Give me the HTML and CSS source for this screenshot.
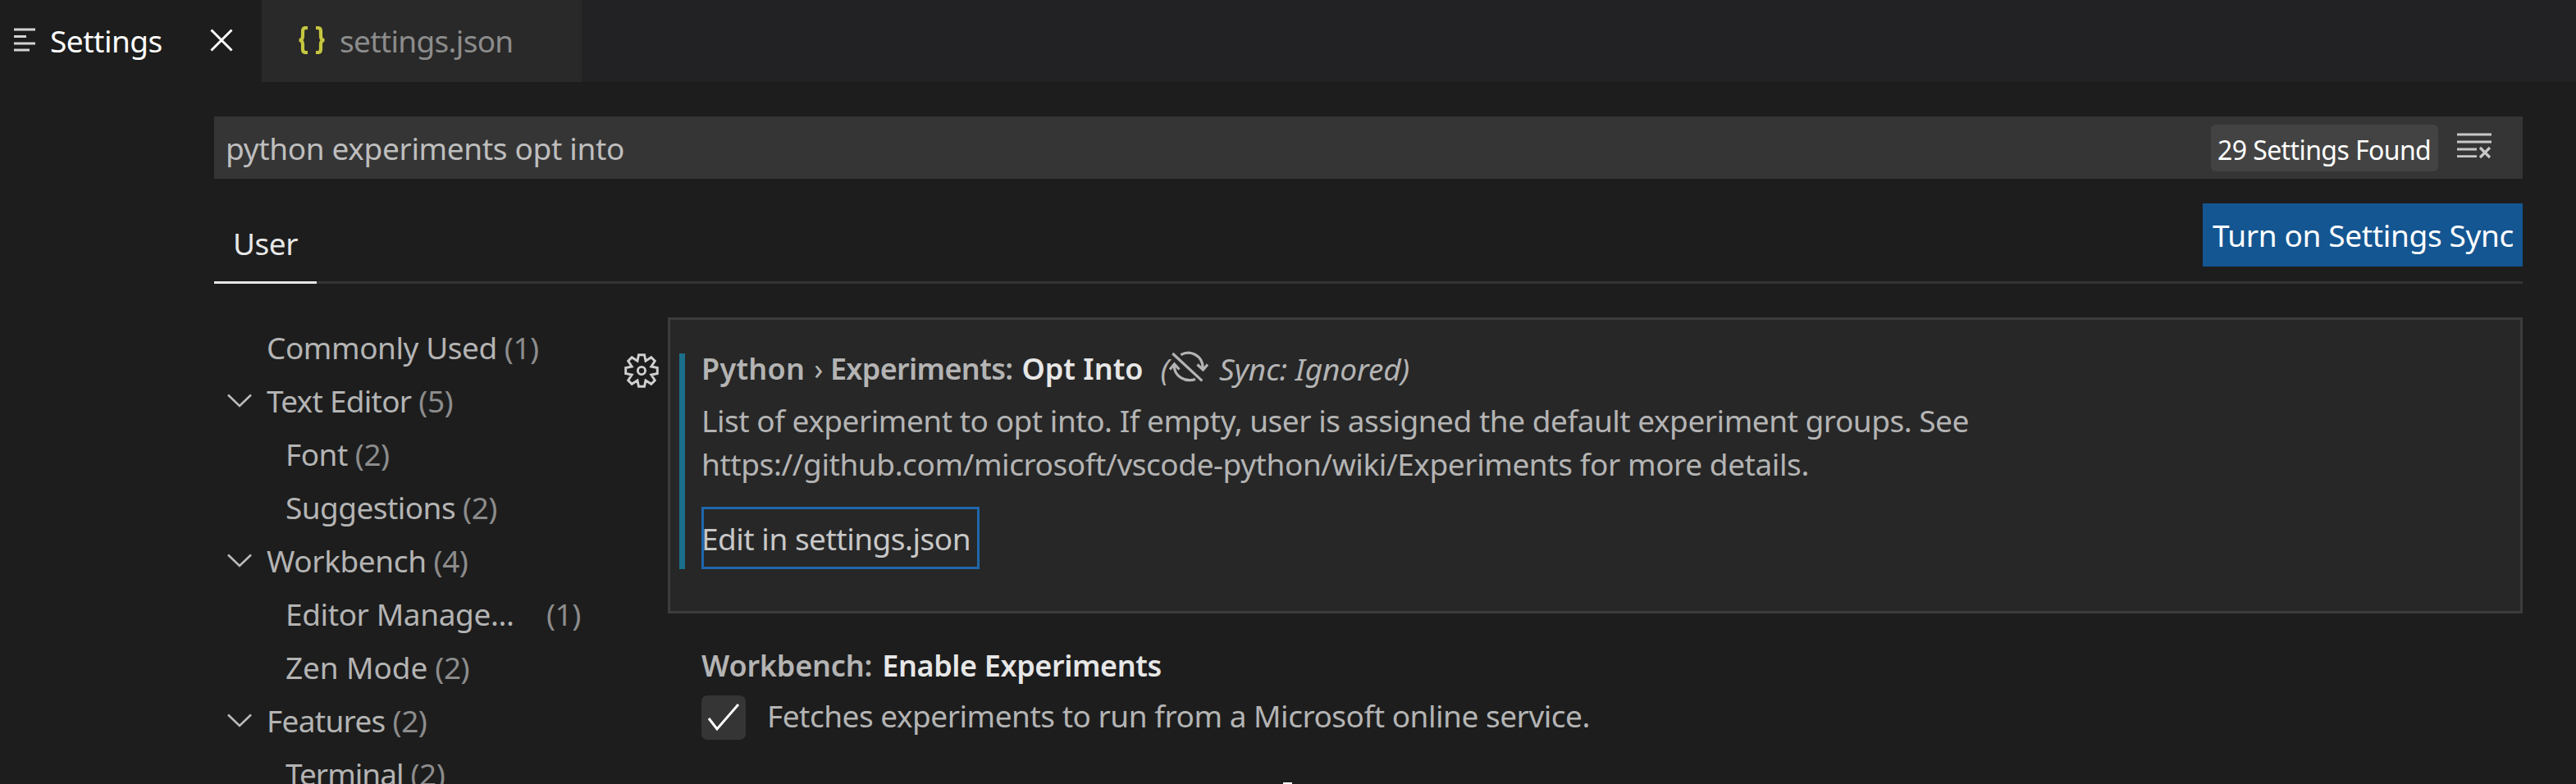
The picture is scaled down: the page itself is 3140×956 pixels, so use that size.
FILE: index.html
```html
<!DOCTYPE html>
<html lang="en">
<head>
<meta charset="utf-8">
<title>Settings</title>
<link rel="stylesheet" href="styles.css">
</head>
<body>
<div class="window">
  <div class="tabs">
    <div class="tab tab-active">
      <svg class="icon-list" width="27" height="30" viewBox="0 0 27 30"><path d="M0 2h26M0 10.5h15M0 19h26M0 27h19" stroke="#d4d4d4" stroke-width="2.8"/></svg>
      <span class="tab-label">Settings</span>
      <svg class="icon-close" width="28" height="28" viewBox="0 0 28 28"><path d="M1.5 1.5l25 25M26.5 1.5l-25 25" stroke="#fff" stroke-width="3" fill="none"/></svg>
    </div>
    <div class="tab tab-idle">
      <svg class="icon-braces" width="34" height="34" viewBox="0 0 34 34"><path d="M12 2H9.5Q6 2 6 6v6Q6 17 1.5 17Q6 17 6 22v6Q6 32 9.500 32H12M22 2h2.500Q28 2 28 6v6Q28 17 32.500 17Q28 17 28 22v6Q28 32 24.500 32H22" stroke="#c6c640" stroke-width="4.200" fill="none"/></svg>
      <span class="tab-label tab-json">settings.json</span>
    </div>
  </div>
  <div class="editor">
    <div class="search">
      <span class="query">python experiments opt into</span>
      <span class="badge">29 Settings Found</span>
      <svg class="icon-clear" width="42" height="32" viewBox="0 0 42 32"><path d="M0 2h42M0 11h42M0 20h24M0 28.700h24" stroke="#c8c8c8" stroke-width="2.800"/><path d="M28 18l12 12M40 18L28 30" stroke="#c8c8c8" stroke-width="3.200"/></svg>
    </div>
    <div class="scope">
      <div class="scope-tab">User</div>
      <button class="sync-button">Turn on Settings Sync</button>
    </div>
    <div class="body">
      <div class="toc">
        <div class="row"><span class="name commonly">Commonly Used</span><span class="count">(1)</span></div>
        <div class="row"><svg class="chevron" width="30" height="18" viewBox="0 0 30 18"><path d="M1 1.500l14 13.500l14-13.500" stroke="#bbb" stroke-width="2.600" fill="none"/></svg><span class="name text-editor">Text Editor</span><span class="count">(5)</span></div>
        <div class="row child"><span class="name">Font</span><span class="count">(2)</span></div>
        <div class="row child"><span class="name suggestions">Suggestions</span><span class="count">(2)</span></div>
        <div class="row"><svg class="chevron" width="30" height="18" viewBox="0 0 30 18"><path d="M1 1.500l14 13.500l14-13.500" stroke="#bbb" stroke-width="2.600" fill="none"/></svg><span class="name workbench">Workbench</span><span class="count">(4)</span></div>
        <div class="row child"><span class="name manage">Editor Manage...</span><span class="count">(1)</span></div>
        <div class="row child"><span class="name zen">Zen Mode</span><span class="count">(2)</span></div>
        <div class="row"><svg class="chevron" width="30" height="18" viewBox="0 0 30 18"><path d="M1 1.500l14 13.500l14-13.500" stroke="#bbb" stroke-width="2.600" fill="none"/></svg><span class="name features">Features</span><span class="count">(2)</span></div>
        <div class="row child"><span class="name terminal">Terminal</span><span class="count">(2)</span></div>
      </div>
      <div class="gear">
        <svg width="42" height="42" viewBox="-21 -21 42 42"><path d="M-3.500 -19.300H3.500L5 -11.800L11.800 -16.300L16.300 -11.800L11.800 -5L19.300 -3.500V3.500L11.800 5L16.300 11.800L11.800 16.300L5 11.800L3.500 19.300H-3.500L-5 11.800L-11.800 16.300L-16.300 11.800L-11.800 5L-19.300 3.500V-3.500L-11.800 -5L-16.300 -11.800L-11.800 -16.300L-5 -11.800Z" stroke="#d0d0d0" stroke-width="2.900" fill="none"/><circle r="4.600" stroke="#d0d0d0" stroke-width="2.900" fill="none"/></svg>
      </div>
      <div class="settings">
        <div class="card">
          <div class="modified"></div>
          <div class="content">
            <div class="title"><span class="python">Python</span><span class="sep">›</span><span class="experiments">Experiments:</span><strong class="opt">Opt Into</strong><em class="paren">(</em><svg class="icon-sync" width="48" height="38" viewBox="0 0 48 38"><path d="M4.300 3l36 33.300M14.300 4.700C26 -1.500 41 5 41.300 21M34.500 16.500l7 6.500l5.500-6.500M32 34.500C20 38.500 6 31 6.300 17.500M1 22.500l5.500-6.500l6 6.500" stroke="#b4b4b4" stroke-width="3.200" fill="none"/></svg><em class="ignored">Sync: Ignored)</em></div>
            <p class="desc"><span class="line1">List of experiment to opt into. If empty, user is assigned the default experiment groups. See</span><br><span class="line2">https://github.com/microsoft/vscode-python/wiki/Experiments for more details.</span></p>
            <a class="edit">Edit in settings.json</a>
          </div>
        </div>
        <div class="item">
          <div class="title"><span class="wb">Workbench:</span><strong class="enable">Enable Experiments</strong></div>
          <div class="check-row">
            <span class="checkbox"><svg width="40" height="36" viewBox="0 0 40 36"><path d="M2 19l10 13L38 2" stroke="#fff" stroke-width="3" fill="none"/></svg></span>
            <span class="fetches">Fetches experiments to run from a Microsoft online service.</span>
          </div>
        </div>
      </div>
    </div>
  </div>
  <div class="pointer"></div>
</div>
</body>
</html>
```
FILE: styles.css
```css
* { box-sizing: border-box; }
body { margin: 0; background: #1d1d1d; }
.window {
  position: relative;
  width: 3140px;
  height: 956px;
  overflow: hidden;
  background: #1d1d1d;
  color: #b4b4b4;
  font: 37px "Noto Sans", "Open Sans", sans-serif;
  letter-spacing: -0.5px;
  white-space: nowrap;
}

.tabs { display: flex; height: 100px; background: #222224; }
.tab { display: flex; align-items: center; padding-bottom: 3px; }
.tab-active { width: 319px; padding-left: 17px; background: #1d1d1d; color: #fff; }
.tab-label { padding-top: 1px; }
.tab-active .tab-label { margin-left: 17px; width: 178px; }
.icon-close { margin-left: 17px; }
.tab-idle { width: 390px; padding-left: 44px; background: #292929; color: #8c8c8c; }
.tab-json { margin-left: 17px; letter-spacing: -0.7px; }

.editor { padding: 42px 65px 0 261px; }
.search {
  display: flex;
  align-items: center;
  height: 76px;
  padding: 0 38px 0 14px;
  background: #353535;
  color: #bebebe;
}
.query { flex: 1; padding-top: 1px; letter-spacing: -0.35px; }
.badge {
  width: 277px;
  height: 57px;
  margin-right: 23px;
  padding: 2px 0 0 8px;
  border-radius: 6px;
  background: #434343;
  color: #fff;
  font-size: 32px;
  line-height: 57px;
  letter-spacing: -0.59px;
}
.icon-clear { margin-bottom: 4px; }

.scope {
  display: flex;
  justify-content: space-between;
  align-items: flex-start;
  height: 128px;
  padding-top: 30px;
  border-bottom: 3px solid #333;
}
.scope-tab {
  width: 125px;
  height: 98px;
  padding: 17px 0 0 23px;
  border-bottom: 3px solid #e7e7e7;
  color: #e7e7e7;
  line-height: 63px;
}
.sync-button {
  width: 390px;
  height: 77px;
  padding: 0 0 0 12px;
  border: 0;
  background: #145692;
  color: #fff;
  font: inherit;
  letter-spacing: -0.36px;
  text-align: left;
}

.body { display: flex; padding-top: 41px; }
.toc { width: 500px; height: 569px; padding-top: 4px; }
.row { display: flex; align-items: center; height: 65px; padding-left: 64px; }
.row.child { padding-left: 87px; }
.chevron { margin: 0 18px 0 -48px; }
.commonly { letter-spacing: -0.45px; }
.text-editor { letter-spacing: -0.75px; }
.suggestions { letter-spacing: -0.55px; }
.workbench { letter-spacing: -0.4px; }
.zen { letter-spacing: -0.1px; }
.features { letter-spacing: -0.7px; }
.terminal { letter-spacing: -1px; }
.manage { width: 309px; letter-spacing: -0.4px; }
.count { margin-left: 9px; color: #8c8c8c; }

.gear { width: 53px; padding-top: 44px; }
.settings { flex: 1; }
.card {
  display: flex;
  height: 361px;
  padding: 24px 0 0 11px;
  border: 3px solid #3c3c3c;
  background: #272727;
}
.modified { width: 7px; height: 263px; margin-top: 17px; background: #1b6f8a; }
.content { margin-left: 20px; }
.title {
  display: flex;
  align-items: center;
  height: 71px;
  font-size: 36px;
  font-weight: 600;
  line-height: 71px;
}
.title strong { color: #e7e7e7; font-weight: 600; }
.title em { font-size: 37px; font-weight: 400; letter-spacing: -0.1px; }
.python { letter-spacing: 0.26px; }
.sep { margin: 0 9px 0 11px; font-weight: 400; }
.experiments { letter-spacing: -0.66px; }
.opt { margin-left: 11px; letter-spacing: 0; }
.paren { margin-left: 21px; }
.icon-sync { margin: 0 10px 6px 0; }
.ignored { margin-left: 3px; }
.desc { margin: 0; padding-top: 1px; line-height: 53px; }
.line1 { letter-spacing: -0.48px; }
.line2 { letter-spacing: -0.43px; }
.edit {
  display: block;
  width: 339px;
  height: 76px;
  margin: 26px 0 0 0;
  border: 3px solid #1f67ac;
  color: #c8c8c8;
  line-height: 71px;
  letter-spacing: -0.5px;
  text-indent: -3px;
}

.item { padding: 28px 0 0 41px; }
.wb { letter-spacing: -0.19px; }
.enable { margin-left: 12px; letter-spacing: -0.4px; }
.check-row { display: flex; height: 54px; margin-top: 1px; }
.checkbox {
  display: flex;
  align-items: center;
  justify-content: center;
  width: 54px;
  border-radius: 7px;
  background: #353535;
}
.fetches { margin-left: 26px; line-height: 50px; letter-spacing: -0.49px; }

.pointer {
  position: absolute;
  left: 1564px;
  bottom: 0;
  width: 11px;
  height: 2px;
  background: #fff;
}
```
